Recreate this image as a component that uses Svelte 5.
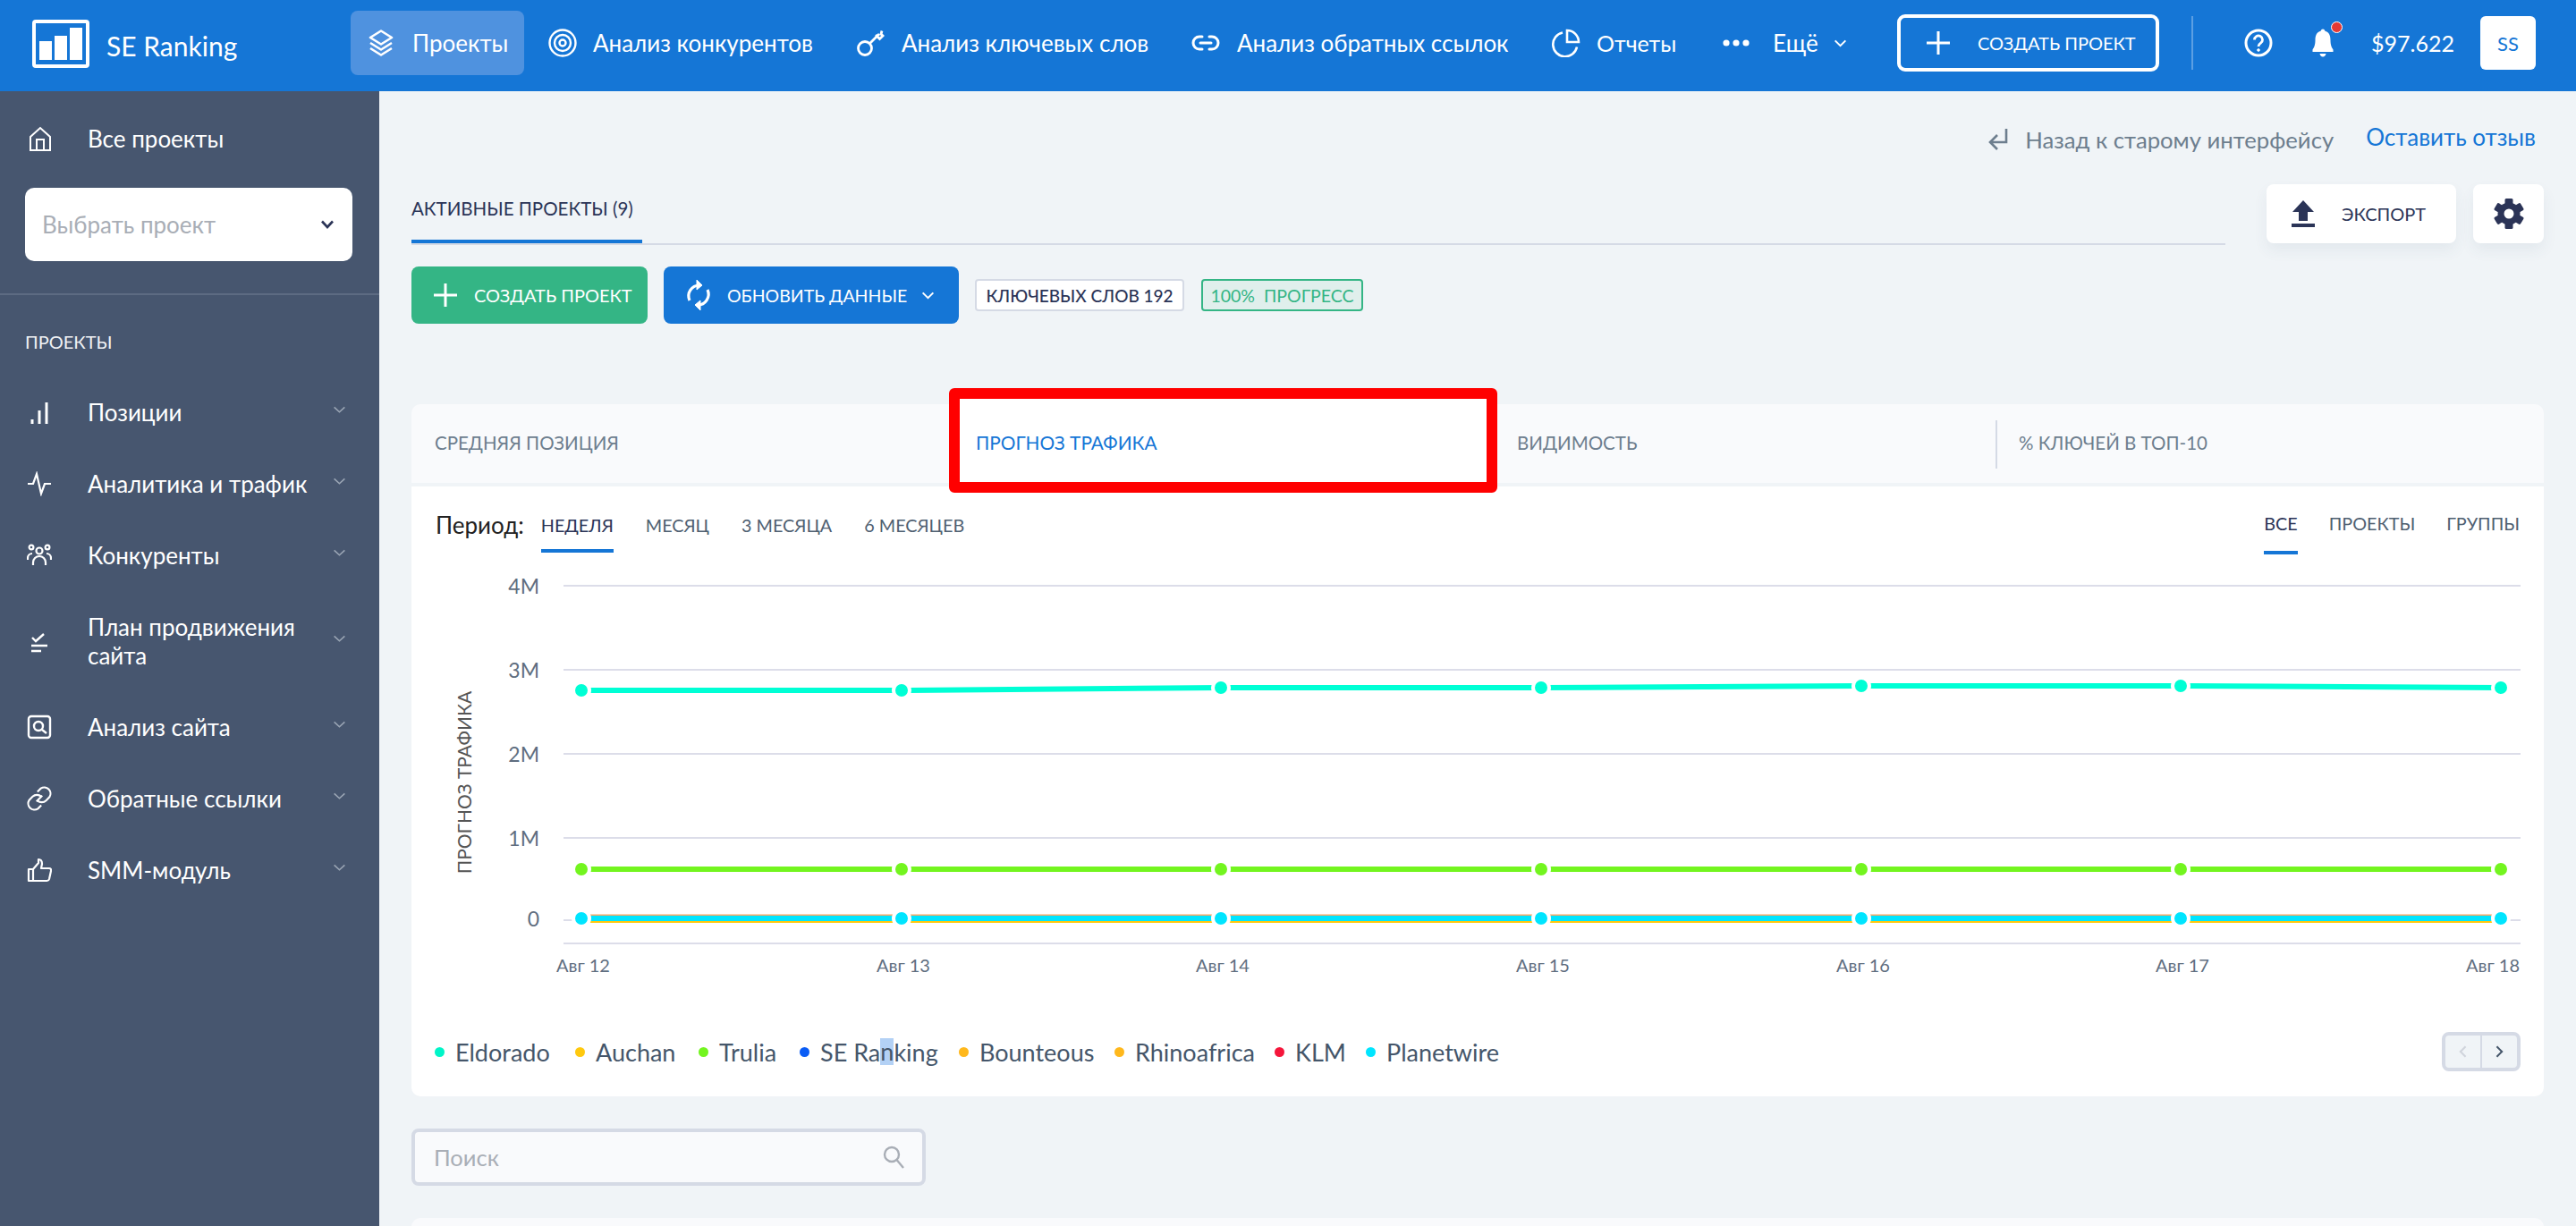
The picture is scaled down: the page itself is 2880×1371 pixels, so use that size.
<script>
  const xs = [650, 1008, 1365, 1723, 2081, 2438, 2796];
  const dates = ['Авг 12', 'Авг 13', 'Авг 14', 'Авг 15', 'Авг 16', 'Авг 17'];
  const grid = [[655, '4M'], [749, '3M'], [843, '2M'], [937, '1M']];
  const eld = [772, 772, 769, 769, 767, 767, 769];
  const pts = (ys) => xs.map((x, i) => `${x},${ys[i]}`).join(' ');
  const flat = (y) => xs.map((x) => `${x},${y}`).join(' ');
  const legend = [
    ['Eldorado', '#00f5c8', 157], ['Auchan', '#ffc90e', 138], ['Trulia', '#73f51f', 113]
  ];
  const legend2 = [
    ['Bounteous', '#ffb81c', 174], ['Rhinoafrica', '#ffb81c', 179], ['KLM', '#f5163b', 102], ['Planetwire', '#00e5ff', 140]
  ];
  const side = [
    ['Позиции', 'bars'], ['Аналитика и трафик', 'pulse'], ['Конкуренты', 'people'],
    ['План продвижения сайта', 'check'], ['Анализ сайта', 'site'], ['Обратные ссылки', 'link'], ['SMM-модуль', 'thumb']
  ];
</script>

<div class="page">
  <header class="top">
    <div class="brand">
      <svg class="logo" viewBox="0 0 64 54"><rect x="2" y="2" width="60" height="50" rx="2" fill="none" stroke="#fff" stroke-width="4"/><path d="M8 24h14v21H8zM25 18h14v27H25zM42 9h14v36H42z" fill="#fff"/></svg>
      <span>SE Ranking</span>
    </div>
    <nav class="nav">
      <a class="n n1" href="#a">
        <svg viewBox="0 0 30 30" class="ni" fill="none" stroke="#fff" stroke-width="2.6" stroke-linejoin="round"><path d="M15 1.5 27 9 15 16.5 3 9z"/><path d="M3 15l12 7.5L27 15"/><path d="M3 21l12 7.5L27 21"/></svg>
        <span>Проекты</span>
      </a>
      <a class="n n2" href="#a">
        <svg viewBox="0 0 32 32" class="ni" fill="none" stroke="#fff" stroke-width="2.4"><circle cx="16" cy="16" r="14.5"/><circle cx="16" cy="16" r="9"/><circle cx="16" cy="16" r="3.5"/></svg>
        <span>Анализ конкурентов</span>
      </a>
      <a class="n n3" href="#a">
        <svg viewBox="0 0 32 32" class="ni" fill="none" stroke="#fff" stroke-width="2.8"><circle cx="9" cy="22" r="7.5"/><path d="M14.5 16.500 25 6M21 7l4.500 4.500 3.500-3.500-2-2 1-3.500"/></svg>
        <span>Анализ ключевых слов</span>
      </a>
      <a class="n n4" href="#a">
        <svg viewBox="0 0 32 18" class="ni wide" fill="none" stroke="#fff" stroke-width="3" stroke-linecap="round"><path d="M12 2H9a7 7 0 0 0 0 14h3M20 2h3a7 7 0 0 1 0 14h-3M10 9h12"/></svg>
        <span>Анализ обратных ссылок</span>
      </a>
      <a class="n n5" href="#a">
        <svg viewBox="0 0 32 32" class="ni" fill="none" stroke="#fff" stroke-width="2.6"><path d="M12 4.500a13.500 13.500 0 1 0 16 16"/><path d="M17 2a13 13 0 0 1 13 13H17z"/></svg>
        <span>Отчеты</span>
      </a>
      <a class="n n6" href="#a">
        <svg viewBox="0 0 30 8" class="dots" fill="#fff"><circle cx="4" cy="4" r="3.6"/><circle cx="15" cy="4" r="3.6"/><circle cx="26" cy="4" r="3.6"/></svg>
        <span>Ещё</span>
        <svg viewBox="0 0 16 10" class="chev" fill="none" stroke="#fff" stroke-width="2.2"><path d="M1.5 1.5 8 8l6.5-6.5"/></svg>
      </a>
    </nav>
    <button class="hcreate">
      <svg viewBox="0 0 26 26" class="plus" stroke="#fff" stroke-width="3"><path d="M13 0v26M0 13h26"/></svg>
      <span>СОЗДАТЬ ПРОЕКТ</span>
    </button>
    <div class="vsep"></div>
    <svg class="help" viewBox="0 0 32 32" fill="none" stroke="#fff" stroke-width="3"><circle cx="16" cy="16" r="14"/><path d="M11.5 12.5a4.5 4.5 0 1 1 7 3.7c-1.700 1.100-2.500 2-2.500 3.800" stroke-width="2.800"/><circle cx="16" cy="24" r="1.300" fill="#fff" stroke-width="1"/></svg>
    <div class="bell">
      <svg viewBox="0 0 28 34" fill="#fff"><path d="M14 1.500c1.300 0 2 .9 2.200 2.100C21 5 22.500 9 22.500 14c0 6 1.500 8 3 10.500v2.500h-23v-2.500C4 22 5.500 20 5.500 14c0-5 1.500-9 6.300-10.400C12 2.400 12.700 1.500 14 1.500z"/><path d="M10.500 29h7c-.4 2-1.700 3.500-3.500 3.500s-3.100-1.500-3.500-3.500z"/></svg>
      <i></i>
    </div>
    <div class="money">$97.622</div>
    <div class="ava">SS</div>
  </header>

  <div class="body">
    <aside class="side">
      <a class="all" href="#a">
        <svg viewBox="0 0 26 28" fill="none" stroke="#fff" stroke-width="2"><path d="M2 12 13 2l11 10v15H2z"/><path d="M9 27V15h8v12"/></svg>
        <span>Все проекты</span>
      </a>
      <div class="sel"><span>Выбрать проект</span>
        <svg viewBox="0 0 16 10" fill="none" stroke="#2b3457" stroke-width="2.600"><path d="M2 1.500 8 8l6-6.500"/></svg>
      </div>
      <div class="sdiv"></div>
      <div class="slabel">ПРОЕКТЫ</div>
      <div class="rows">
      {#each side as [name, ic]}
        <a class="row" class:tall={ic === 'check'} href="#a">
          <span class="ic">
            {#if ic === 'bars'}
              <svg viewBox="0 0 28 28" stroke="#fff" stroke-width="3"><path d="M6 27v-5M14 27V12M22 27V3"/></svg>
            {:else if ic === 'pulse'}
              <svg viewBox="0 0 28 28" fill="none" stroke="#fff" stroke-width="2.200"><path d="M1 14h6l4-11 5 22 4-11h7"/></svg>
            {:else if ic === 'people'}
              <svg viewBox="0 0 28 26" fill="none" stroke="#fff" stroke-width="2.200"><circle cx="14" cy="8" r="3.500"/><circle cx="5" cy="4" r="2.400"/><circle cx="23" cy="4" r="2.400"/><path d="M7 24v-3a7 7 0 0 1 14 0v3M1 18v-2a5 5 0 0 1 5-5M27 18v-2a5 5 0 0 0-5-5"/></svg>
            {:else if ic === 'check'}
              <svg viewBox="0 0 28 28" fill="none" stroke="#fff" stroke-width="2.400"><path d="M6 10l4 4 9-8M5 19h18M5 25h11"/></svg>
            {:else if ic === 'site'}
              <svg viewBox="0 0 28 28" fill="none" stroke="#fff" stroke-width="2.400"><rect x="2" y="2" width="24" height="24" rx="3"/><circle cx="13" cy="13" r="5"/><path d="M17 17l5 4"/></svg>
            {:else if ic === 'link'}
              <svg viewBox="2 2 26 26" fill="none" stroke="#fff" stroke-width="2"><path d="M12 18 18 12"/><path d="M13 8l3.500-3.500a6.500 6.500 0 0 1 9 9L22 17a6.500 6.500 0 0 1-9 0"/><path d="M17 13a6.500 6.500 0 0 0-9 0l-3.500 3.500a6.500 6.500 0 0 0 9 9L17 22"/></svg>
            {:else}
              <svg viewBox="0 0 28 28" fill="none" stroke="#fff" stroke-width="2.200" stroke-linejoin="round"><path d="M2 13h5v13H2zM7 13l6-7V2c3 0 4 2 4 5l-1 5h9c1.500 0 2.500 1.300 2 3l-2 9c-.4 1.300-1.300 2-2.500 2H7"/></svg>
            {/if}
          </span>
          <span class="lbl">{name}</span>
          <svg class="rc" viewBox="0 0 16 10" fill="none" stroke="#9aa5b4" stroke-width="1.800"><path d="M1.500 1.500 8 7.500l6.500-6"/></svg>
        </a>
      {/each}
      </div>
    </aside>

    <main class="main">
      <div class="links">
        <svg viewBox="0 0 22 26" fill="none" stroke="#6d7e8e" stroke-width="2.600"><path d="M20 1v15H3M10 8l-8 8 8 8"/></svg>
        <span class="back">Назад к старому интерфейсу</span>
        <span class="fb">Оставить отзыв</span>
      </div>

      <div class="tabsrow">
        <div class="atabs"><div class="atab">АКТИВНЫЕ ПРОЕКТЫ (9)</div></div>
        <button class="wbtn exp">
          <svg viewBox="0 0 26 30" fill="#2b3457"><path d="M13 0 25 13h-7v10H8V13H1z"/><rect y="26" width="26" height="4"/></svg>
          <span>ЭКСПОРТ</span>
        </button>
        <button class="wbtn gear" aria-label="Настройки">
          <svg viewBox="0 0 34 34" fill="#2b3457">
            <rect x="12.500" y="0" width="9" height="34" rx="1.500"/>
            <rect x="12.500" y="0" width="9" height="34" rx="1.500" transform="rotate(60 17 17)"/>
            <rect x="12.500" y="0" width="9" height="34" rx="1.500" transform="rotate(120 17 17)"/>
            <circle cx="17" cy="17" r="12.500"/>
            <circle cx="17" cy="17" r="5.500" fill="#fff"/>
          </svg>
        </button>
      </div>

      <div class="actions">
        <button class="cbtn green">
          <svg viewBox="0 0 26 26" stroke="#fff" stroke-width="3"><path d="M13 0v26M0 13h26"/></svg>
          <span>СОЗДАТЬ ПРОЕКТ</span>
        </button>
        <button class="cbtn blue">
          <svg viewBox="0 0 30 36" fill="none" stroke="#fff" stroke-width="3.200"><path d="M5 24a12 12 0 0 1 11-17"/><path d="M25 12a12 12 0 0 1-11 17"/><path d="M13 1l6 6-6 5z" fill="#fff" stroke-width="1"/><path d="M17 35l-6-6 6-5z" fill="#fff" stroke-width="1"/></svg>
          <span>ОБНОВИТЬ ДАННЫЕ</span>
          <svg class="cv" viewBox="0 0 16 10" fill="none" stroke="#fff" stroke-width="2.200"><path d="M1.500 1.500 8 8l6.500-6.500"/></svg>
        </button>
        <span class="badge kw">КЛЮЧЕВЫХ СЛОВ 192</span>
        <span class="badge prog">100%&nbsp; ПРОГРЕСС</span>
      </div>

      <section class="card">
        <div class="mtabs">
          <div class="mt t1">СРЕДНЯЯ ПОЗИЦИЯ</div>
          <div class="mt t2"><div class="redbox"></div><span>ПРОГНОЗ ТРАФИКА</span></div>
          <div class="mt t3">ВИДИМОСТЬ</div>
          <div class="mt t4"><i></i>% КЛЮЧЕЙ В ТОП-10</div>
        </div>
        <div class="cbody">
          <div class="periods">
            <div class="pl">
              <span class="plabel">Период:</span>
              <span class="pt on">НЕДЕЛЯ</span>
              <span class="pt">МЕСЯЦ</span>
              <span class="pt">3 МЕСЯЦА</span>
              <span class="pt">6 МЕСЯЦЕВ</span>
            </div>
            <div class="pr">
              <span class="pt on">ВСЕ</span>
              <span class="pt">ПРОЕКТЫ</span>
              <span class="pt">ГРУППЫ</span>
            </div>
          </div>

          <svg class="chart" viewBox="460 640 2384 470" width="2384" height="470">
            {#each grid as [y, l]}
              <line x1="630" x2="2818" y1={y} y2={y} stroke="#dcdde9" stroke-width="2"/>
              <text x="603" y={y + 9} text-anchor="end" class="ya">{l}</text>
            {/each}
            <line x1="630" x2="2818" y1="1029" y2="1029" stroke="#dcdde9" stroke-width="2"/>
            <line x1="630" x2="2818" y1="1055" y2="1055" stroke="#dcdde9" stroke-width="2"/>
            <text x="603" y="1036" text-anchor="end" class="ya">0</text>
            <text class="yt" transform="translate(527 875) rotate(-90)" text-anchor="middle">ПРОГНОЗ ТРАФИКА</text>

            <polyline points={pts(eld)} fill="none" stroke="#00ffd5" stroke-width="6"/>
            <polyline points={flat(972)} fill="none" stroke="#73f51f" stroke-width="6"/>
            <polyline points={flat(1023.500)} fill="none" stroke="#f0a868" stroke-width="2"/>
            <polyline points={flat(1031)} fill="none" stroke="#ffc90e" stroke-width="2"/>
            <polyline points={flat(1027)} fill="none" stroke="#00e5ff" stroke-width="6"/>

            {#each xs as x, i}
              <circle cx={x} cy={eld[i]} r="9" fill="#00ffd5" stroke="#fff" stroke-width="4"/>
              <circle cx={x} cy="972" r="9" fill="#73f51f" stroke="#fff" stroke-width="4"/>
              <circle cx={x} cy="1027" r="9" fill="#00e5ff" stroke="#fff" stroke-width="4"/>
            {/each}
            {#each dates as d, i}
              <text x={xs[i] + 2} y="1087" text-anchor="middle" class="xa">{d}</text>
            {/each}
            <text x="2817" y="1087" text-anchor="end" class="xa">Авг 18</text>
          </svg>

          <div class="legend">
            {#each legend as [n, c, w]}
              <span class="li" style="width:{w}px"><i style="background:{c}"></i>{n}</span>
            {/each}
            <span class="li" style="width:178px"><i style="background:#0a5cf5"></i>SE Ra<span class="hl">n</span>king</span>
            {#each legend2 as [n, c, w]}
              <span class="li" style="width:{w}px"><i style="background:{c}"></i>{n}</span>
            {/each}
            <div class="pager">
              <span class="pb"><svg viewBox="0 0 10 16" fill="none" stroke="#d0d4dc" stroke-width="2.400"><path d="M8.500 1.500 2 8l6.500 6.500"/></svg></span>
              <span class="pb"><svg viewBox="0 0 10 16" fill="none" stroke="#45566a" stroke-width="2.400"><path d="M1.500 1.500 8 8l-6.500 6.500"/></svg></span>
            </div>
          </div>
        </div>
      </section>

      <div class="search">
        <span>Поиск</span>
        <svg viewBox="0 0 24 26" fill="none" stroke="#a9aeb6" stroke-width="2.400"><circle cx="10" cy="10" r="8"/><path d="M15.500 16 23 25"/></svg>
      </div>

      <div class="next"></div>
    </main>
  </div>
</div>

<style>
  :global(body) { margin: 0; background: #f0f4f7; }
  .page { width: 2880px; height: 1371px; overflow: hidden; display: flex; flex-direction: column; font-family: Lato, "Open Sans", "Noto Sans", sans-serif; }
  a { color: inherit; text-decoration: none; }
  button { font-family: inherit; border: 0; padding: 0; cursor: pointer; }

  .top { height: 102px; flex: none; background: #1576d6; color: #fff; display: flex; align-items: center; }
  .brand { width: 392px; box-sizing: border-box; padding-left: 36px; display: flex; align-items: center; gap: 19px; font-size: 30px; }
  .brand .logo { width: 64px; height: 54px; margin-top: -4px; }
  .nav { display: flex; align-items: center; font-size: 26px; }
  .n { display: flex; align-items: center; height: 72px; box-sizing: border-box; margin-top: -6px; }
  .n span { white-space: nowrap; }
  .ni { width: 32px; height: 32px; flex: none; }
  .ni.wide { height: 18px; }
  .n1 { width: 194px; padding-left: 19px; background: #4f92df; border-radius: 8px; gap: 20px; }
  .n1 .ni { width: 30px; height: 30px; }
  .n2 { width: 372px; padding-left: 27px; gap: 18px; }
  .n3 { width: 374px; gap: 18px; }
  .n4 { width: 403px; gap: 19px; }
  .n5 { width: 191px; gap: 18px; font-size: 25px; }
  .n6 { width: 195px; }
  .dots { width: 30px; height: 8px; margin-right: 26px; }
  .chev { width: 15px; height: 9px; margin-left: 17px; }
  .hcreate { width: 293px; height: 64px; margin-top: -6px; border: 4px solid #fff; border-radius: 9px; background: transparent; color: #fff; display: flex; align-items: center; box-sizing: border-box; padding-left: 29px; font-size: 20px; }
  .plus { width: 26px; height: 26px; margin-right: 31px; }
  .vsep { width: 2px; height: 60px; background: #5c9fe3; margin: -6px 57px 0 36px; }
  .help { width: 32px; height: 32px; margin-top: -6px; }
  .bell { position: relative; width: 28px; height: 34px; margin: -6px 0 0 42px; }
  .bell svg { width: 28px; height: 34px; display: block; }
  .bell i { position: absolute; left: 23px; top: -7px; width: 11px; height: 11px; border-radius: 50%; background: #e53935; border: 1px solid #fff; }
  .money { margin: -6px 0 0 40px; width: 122px; font-size: 25px; }
  .ava { width: 62px; height: 60px; margin-top: -6px; background: #fff; color: #1576d6; border-radius: 6px; display: flex; align-items: center; justify-content: center; font-size: 22px; }

  .body { flex: 1; display: flex; min-height: 0; }
  .side { width: 424px; flex: none; background: #47566f; color: #fff; }
  .all { display: flex; align-items: center; height: 108px; box-sizing: border-box; padding: 0 0 3px 32px; font-size: 26px; }
  .all svg { width: 26px; height: 28px; margin-right: 40px; }
  .sel { margin: 0 30px 0 28px; height: 82px; background: #fff; border-radius: 10px; display: flex; align-items: center; justify-content: space-between; padding: 0 20px 0 19px; font-size: 26px; color: #a9aeb6; }
  .sel svg { width: 16px; height: 10px; }
  .sdiv { height: 2px; background: #5d6b82; margin-top: 36px; }
  .slabel { margin: 40px 0 0 28px; font-size: 20px; line-height: 24px; height: 27px; color: #f0f2f5; }
  .rows { margin-top: 24px; }
  .row { display: flex; align-items: center; height: 80px; padding-left: 30px; padding-right: 37px; font-size: 26px; line-height: 32px; }
  .row.tall { height: 112px; }
  .ic { width: 28px; height: 28px; flex: none; margin-right: 40px; }
  .ic svg { width: 28px; height: 28px; display: block; }
  .lbl { flex: 1; }
  .rc { width: 15px; height: 9px; flex: none; margin-top: -6px; }

  .main { flex: 1; box-sizing: border-box; padding: 0 36px; min-width: 0; }
  .links { height: 36px; margin-top: 36px; display: flex; align-items: center; justify-content: flex-end; padding-right: 9px; font-size: 26px; color: #6d7e8e; }
  .links svg { width: 22px; height: 26px; margin-right: 19px; }
  .back { margin-right: 36px; font-size: 25.700px; }
  .fb { color: #1576d6; margin-top: -6px; }
  .tabsrow { display: flex; margin-top: 32px; height: 66px; }
  .atabs { width: 2028px; margin-right: 46px; height: 66px; border-bottom: 2px solid #d5dae5; box-sizing: content-box; }
  .atab { width: 258px; height: 60px; line-height: 50px; box-sizing: content-box; border-bottom: 4px solid #1576d6; font-size: 20.500px; color: #2b3457; white-space: nowrap; margin-top: 2px; }
  .wbtn { height: 66px; background: #fff; border-radius: 8px; box-shadow: 0 8px 16px rgba(60, 80, 120, .07); display: flex; align-items: center; color: #2b3457; font-size: 20px; }
  .exp { width: 212px; padding-left: 28px; box-sizing: border-box; }
  .exp svg { width: 26px; height: 30px; margin-right: 30px; }
  .gear { width: 79px; margin-left: 19px; justify-content: center; }
  .gear svg { width: 34px; height: 34px; }
  .actions { display: flex; align-items: center; margin-top: 26px; height: 64px; }
  .cbtn { height: 64px; border-radius: 8px; color: #fff; font-size: 20px; display: flex; align-items: center; box-sizing: border-box; }
  .green { width: 264px; background: #34b585; padding-left: 25px; margin-right: 18px; }
  .green svg { width: 26px; height: 26px; margin-right: 19px; }
  .blue { width: 330px; background: #1576d6; padding-left: 24px; margin-right: 18px; font-size: 19.500px; }
  .blue svg:first-child { width: 30px; height: 36px; margin-right: 17px; }
  .blue .cv { width: 15px; height: 9px; margin-left: 16px; }
  .badge { height: 36px; box-sizing: border-box; border: 2px solid #d5dae5; border-radius: 4px; background: #fff; display: flex; align-items: center; justify-content: center; font-size: 19px; color: #2b3457; white-space: nowrap; }
  .kw { width: 234px; margin-right: 19px; font-weight: 500; }
  .prog { width: 181px; background: #e0efec; border-color: #34b585; color: #34b585; font-size: 19.500px; }

  .card { margin-top: 90px; }
  .mtabs { display: flex; height: 88px; background: #f9fafc; border-radius: 10px 10px 0 0; font-size: 20.500px; color: #6d7e8e; padding-bottom: 3px; box-sizing: border-box; }
  .mt { display: flex; align-items: center; box-sizing: border-box; position: relative; white-space: nowrap; }
  .t1 { width: 612px; padding-left: 26px; }
  .t2 { width: 598px; padding-left: 19px; color: #1576d6; font-size: 20.800px; }
  .t2 span { position: relative; }
  .t3 { width: 561px; padding-left: 26px; }
  .t4 { flex: 1; padding-left: 26px; }
  .t4 i { position: absolute; left: 0; top: 18px; width: 2px; height: 54px; background: #d5dae5; }
  .redbox { position: absolute; left: -11px; top: -18px; width: 613px; height: 117px; box-sizing: border-box; border: 12px solid #f00; border-radius: 6px; background: #fff; }
  .cbody { margin-top: 4px; background: #fff; height: 682px; border-radius: 0 0 10px 10px; }
  .periods { display: flex; justify-content: space-between; height: 96px; box-sizing: border-box; padding: 29px 27px 0 27px; }
  .pl, .pr { display: flex; align-items: flex-start; gap: 36px; }
  .pr { margin-top: -2px; gap: 35px; }
  .plabel { font-size: 26px; color: #222; line-height: 28px; margin-right: -17px; }
  .pt { font-size: 19.800px; line-height: 28px; color: #4f6071; padding-bottom: 13px; border-bottom: 4px solid transparent; white-space: nowrap; }
  .pr .pt { padding-bottom: 17px; }
  .pt.on { color: #2b3457; border-bottom-color: #1576d6; }
  .chart { display: block; }
  .ya { font-size: 23px; fill: #5f6e80; }
  .xa { font-size: 20px; fill: #5f6e80; }
  .yt { font-size: 21px; fill: #555; }
  .legend { position: relative; display: flex; align-items: center; padding-left: 26px; height: 60px; margin-top: 36px; font-size: 27px; color: #45566a; }
  .li { display: flex; align-items: center; white-space: nowrap; }
  .li i { width: 11px; height: 11px; border-radius: 50%; margin-right: 12px; flex: none; }
  .hl { background: #b3d1f5; line-height: 30px; }
  .pager { position: absolute; left: 2270px; top: 8px; width: 88px; height: 44px; box-sizing: border-box; border: 4px solid #d5dae5; border-radius: 8px; background: #f0f4f7; display: flex; }
  .pb { flex: 1; display: flex; align-items: center; justify-content: center; }
  .pb + .pb { border-left: 2px solid #d5dae5; }
  .pb svg { width: 9px; height: 14px; }
  .search { margin-top: 36px; width: 575px; height: 64px; box-sizing: border-box; border: 4px solid #d5dae5; border-radius: 8px; background: #f9fafc; display: flex; align-items: center; justify-content: space-between; padding: 0 20px 0 21px; font-size: 25.500px; color: #a9aeb6; }
  .search svg { width: 24px; height: 26px; }
  .next { margin-top: 36px; height: 40px; background: #f9fafc; border-radius: 10px 10px 0 0; }
</style>
